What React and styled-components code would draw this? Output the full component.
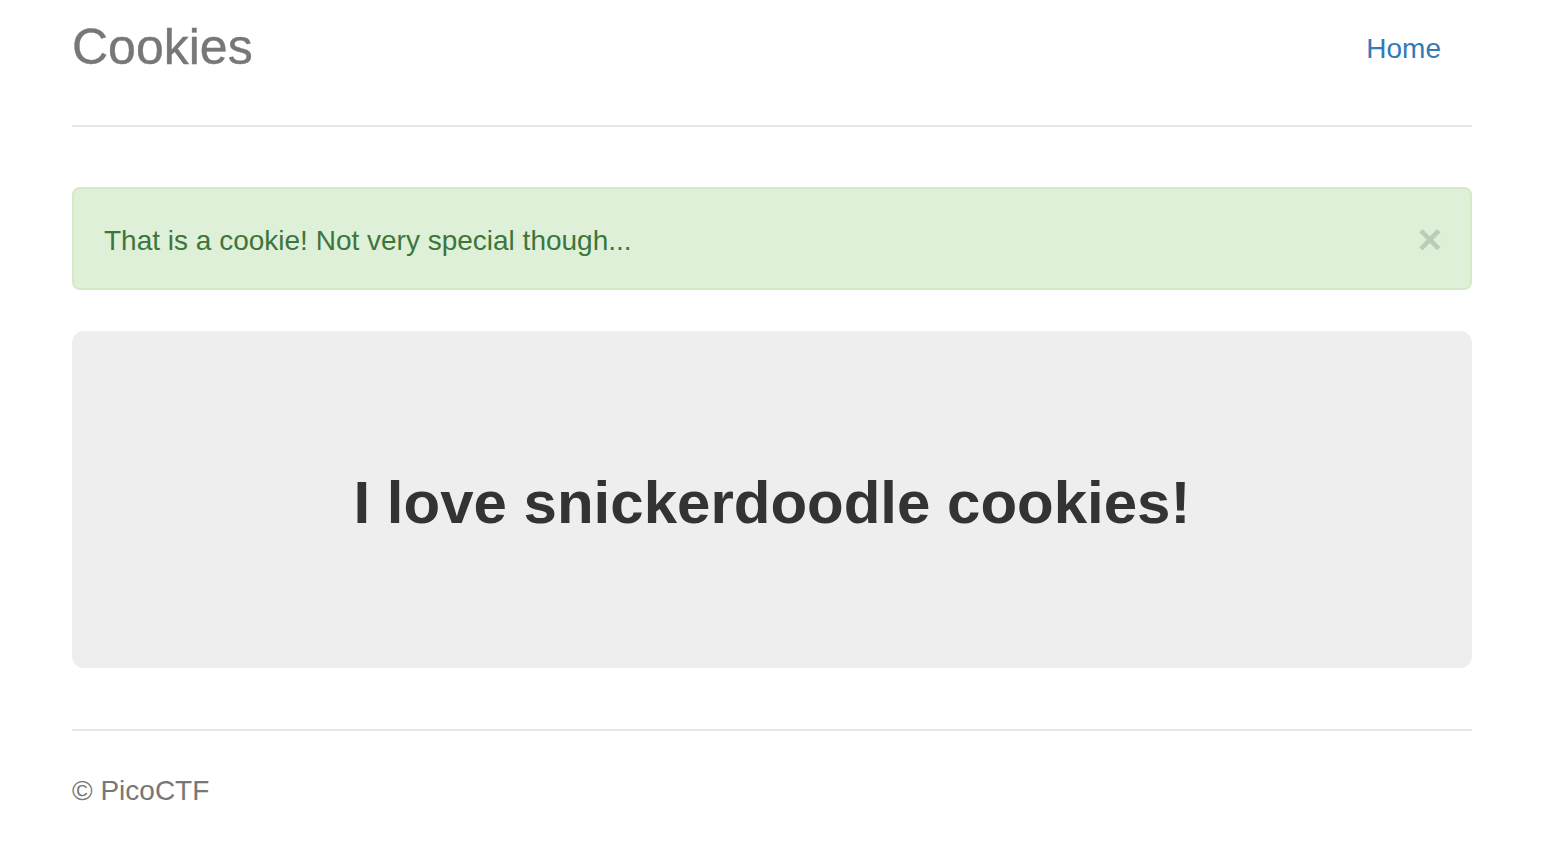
import React from "react";
import styled, { createGlobalStyle } from "styled-components";

const GlobalStyle = createGlobalStyle`
  html, body {
    margin: 0;
    padding: 0;
    background: #fff;
  }
  body {
    font-family: "Liberation Sans", Helvetica, Arial, sans-serif;
    color: #333;
    font-size: 28px;
    line-height: 40px;
  }
  * { box-sizing: border-box; }
`;

const Container = styled.div`
  padding: 0 70px 0 72px;
`;

const Header = styled.header`
  display: flex;
  justify-content: space-between;
  align-items: flex-start;
  padding: 7px 0 38px;
  border-bottom: 2px solid #e5e5e5;
  margin-bottom: 60px;
`;

const Brand = styled.h3`
  margin: 0;
  font-size: 50px;
  line-height: 80px;
  font-weight: 500;
  color: #777;
  -webkit-text-stroke: 0.4px #777;
`;

const Nav = styled.ul`
  display: flex;
  list-style: none;
  margin: 0;
  padding: 0;
`;

const NavLink = styled.a`
  display: block;
  padding: 22px 31px 18px 30px;
  font-size: 28px;
  line-height: 40px;
  color: #337ab7;
  text-decoration: none;
`;

const Alert = styled.div`
  display: flex;
  align-items: center;
  justify-content: space-between;
  padding: 30px 30px 27px;
  background: #dff0d8;
  border: 2px solid #d6e9c6;
  border-radius: 8px;
  color: #3c763d;
  margin-bottom: 41px;
`;

const AlertText = styled.span`
  font-size: 28px;
  line-height: 40px;
  padding-top: 2px;
`;

const Close = styled.button`
  border: 0;
  background: transparent;
  padding: 0;
  margin: 0 -2px 0 0;
  font-family: "Liberation Sans", Arial, sans-serif;
  font-size: 42px;
  line-height: 40px;
  font-weight: 700;
  color: #000;
  opacity: 0.15;
  text-shadow: 0 1px 0 #fff;
  cursor: pointer;
`;

const Jumbotron = styled.div`
  background: #eee;
  border-radius: 12px;
  padding: 129px 0 122px;
  text-align: center;
  margin-bottom: 61px;
`;

const Lead = styled.p`
  margin: 0;
  font-size: 60px;
  line-height: 86px;
  font-weight: 700;
  color: #333;
`;

const Footer = styled.footer`
  border-top: 2px solid #e5e5e5;
  padding-top: 40px;
  color: #777;
`;

const FooterText = styled.p`
  margin: 0;
  font-size: 28px;
  line-height: 40px;
`;

export default function App() {
  return (
    <>
      <GlobalStyle />
      <Container>
        <Header>
          <Brand>Cookies</Brand>
          <Nav>
            <li>
              <NavLink href="#">Home</NavLink>
            </li>
          </Nav>
        </Header>
        <Alert>
          <AlertText>That is a cookie! Not very special though...</AlertText>
          <Close aria-label="close">×</Close>
        </Alert>
        <Jumbotron>
          <Lead>I love snickerdoodle cookies!</Lead>
        </Jumbotron>
        <Footer>
          <FooterText>© PicoCTF</FooterText>
        </Footer>
      </Container>
    </>
  );
}
